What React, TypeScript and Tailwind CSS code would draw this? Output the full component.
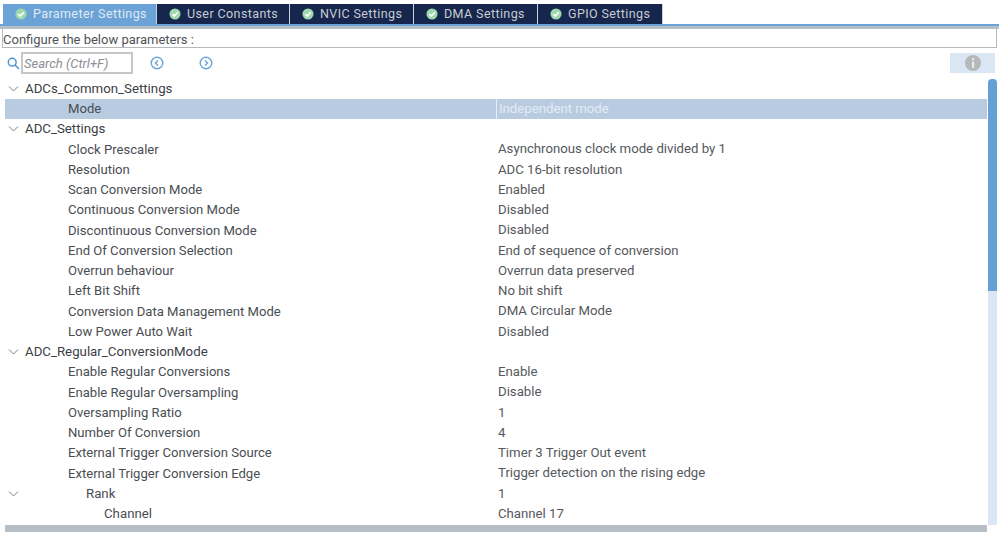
import React from "react";

const tabs = [
  { label: "Parameter Settings", w: "w-[154px]", active: true },
  { label: "User Constants", w: "w-[133px]" },
  { label: "NVIC Settings", w: "w-[124px]" },
  { label: "DMA Settings", w: "w-[124px]" },
  { label: "GPIO Settings", w: "w-[125px]" },
];

type Row = { name: string; value?: string; level: 0 | 1 | 2 | 3; caret?: boolean; selected?: boolean };

const rows: Row[] = [
  { name: "ADCs_Common_Settings", level: 0, caret: true },
  { name: "Mode", value: "Independent mode", level: 1, selected: true },
  { name: "ADC_Settings", level: 0, caret: true },
  { name: "Clock Prescaler", value: "Asynchronous clock mode divided by 1", level: 1 },
  { name: "Resolution", value: "ADC 16-bit resolution", level: 1 },
  { name: "Scan Conversion Mode", value: "Enabled", level: 1 },
  { name: "Continuous Conversion Mode", value: "Disabled", level: 1 },
  { name: "Discontinuous Conversion Mode", value: "Disabled", level: 1 },
  { name: "End Of Conversion Selection", value: "End of sequence of conversion", level: 1 },
  { name: "Overrun behaviour", value: "Overrun data preserved", level: 1 },
  { name: "Left Bit Shift", value: "No bit shift", level: 1 },
  { name: "Conversion Data Management Mode", value: "DMA Circular Mode", level: 1 },
  { name: "Low Power Auto Wait", value: "Disabled", level: 1 },
  { name: "ADC_Regular_ConversionMode", level: 0, caret: true },
  { name: "Enable Regular Conversions", value: "Enable", level: 1 },
  { name: "Enable Regular Oversampling", value: "Disable", level: 1 },
  { name: "Oversampling Ratio", value: "1", level: 1 },
  { name: "Number Of Conversion", value: "4", level: 1 },
  { name: "External Trigger Conversion Source", value: "Timer 3 Trigger Out event", level: 1 },
  { name: "External Trigger Conversion Edge", value: "Trigger detection on the rising edge", level: 1 },
  { name: "Rank", value: "1", level: 2, caret: true },
  { name: "Channel", value: "Channel 17", level: 3 },
];

function Check() {
  return (
    <svg width="12" height="12" viewBox="0 0 13 13" className="shrink-0">
      <circle cx="6.5" cy="6.5" r="6" fill="#9ed8ae" />
      <path d="M3.6 6.7 L5.7 8.7 L9.4 4.8" fill="none" stroke="#ffffff" strokeWidth="1.8" />
    </svg>
  );
}

function Caret() {
  return (
    <svg width="11" height="7" viewBox="0 0 11 7" className="block">
      <path d="M1 1 L5.5 5.5 L10 1" fill="none" stroke="#7b7f86" strokeWidth="1" />
    </svg>
  );
}

function NavCircle({ dir }: { dir: "l" | "r" }) {
  return (
    <svg width="14" height="14" viewBox="0 0 14 14">
      <circle cx="7" cy="7" r="5.8" fill="none" stroke="#6ba6da" strokeWidth="1.4" />
      <path d={dir === "l" ? "M8 4.4 L5.4 7 L8 9.6" : "M6 4.4 L8.6 7 L6 9.6"} fill="none" stroke="#6ba6da" strokeWidth="1.4" />
    </svg>
  );
}

export default function App() {
  return (
    <div className="w-[999px] h-[536px] overflow-hidden bg-white flex flex-col font-['Roboto','Liberation_Sans',sans-serif] text-[13.25px] text-[#4a4d52]">
      <div className="flex h-[24px] pt-[4px] pl-[3px]">
        {tabs.map((t) => (
          <div
            key={t.label}
            className={`${t.w} flex items-center gap-[6px] pl-[12px] tracking-[0.4px] text-[12.5px] border-r border-[#c9d3e0] ${
              t.active ? "bg-[#6ba3d6] text-[#dfeaf5]" : "bg-[#16264c] text-[#c8ccd4]"
            }`}
          >
            <Check />
            <span className="whitespace-nowrap">{t.label}</span>
          </div>
        ))}
      </div>
      <div className="h-[2px] bg-[#6ba3d6]" />
      <div className="h-[3px] bg-[#b7bfc6]" />
      <div className="h-[19px] mx-[2px] border border-t-0 border-[#b5b9bd] flex items-center pt-[4px] text-[#4f5256] whitespace-nowrap text-[13px]">
        Configure the below parameters :
      </div>
      <div className="flex items-center h-[30.5px] pl-[7px] pr-[4px]">
        <svg width="13" height="13" viewBox="0 0 13 13" className="mr-[1px]">
          <circle cx="5.2" cy="5.2" r="3.9" fill="none" stroke="#4d97d6" strokeWidth="1.5" />
          <path d="M8 8 L12 12" stroke="#4d97d6" strokeWidth="1.6" />
        </svg>
        <div className="w-[112px] h-[22px] border-2 border-[#c4c6c8] flex items-center pl-[1px] italic text-[#8b8e92] text-[13px] whitespace-nowrap">
          Search (Ctrl+F)
        </div>
        <div className="ml-[17px] flex gap-[35px]">
          <NavCircle dir="l" />
          <NavCircle dir="r" />
        </div>
        <div className="ml-auto w-[45px] h-[20px] bg-[#dbe6f4] flex items-center justify-center">
          <svg width="16" height="16" viewBox="0 0 16 16">
            <circle cx="8" cy="8" r="8" fill="#b5b7b9" />
            <rect x="7" y="6.5" width="2.2" height="6.5" fill="#e6e8ea" />
            <rect x="7" y="3" width="2.2" height="2.2" fill="#e6e8ea" />
          </svg>
        </div>
      </div>
      <div className="flex flex-1 min-h-0 pl-[5px] pr-[2px]">
        <div className="flex-1 min-w-0 flex flex-col overflow-hidden">
          {rows.map((r) => (
            <div
              key={r.name}
              className={`h-[20.25px] shrink-0 flex items-center whitespace-nowrap ${r.selected ? "bg-[#b9cbe1]" : ""}`}
            >
              <div className="w-[491px] shrink-0 flex items-center relative">
                {r.caret && (
                  <span className="absolute left-[3px] top-1/2 -translate-y-1/2">
                    <Caret />
                  </span>
                )}
                <span
                  className={
                    r.level === 0
                      ? "pl-[20px] text-[#3d4045]"
                      : r.level === 1
                      ? "pl-[63px] text-[13.1px]"
                      : r.level === 2
                      ? "pl-[81px]"
                      : "pl-[99px]"
                  }
                >
                  {r.name}
                </span>
              </div>
              {r.value !== undefined && (
                <div className={`h-full flex items-center pl-[2px] text-[13.2px] ${r.selected ? "border-l border-[#e8eef6] text-[#e4ebf4]" : "text-[#55585c]"}`}>
                  {r.value}
                </div>
              )}
            </div>
          ))}
          <div className="mt-auto mb-[4px] h-[7px] bg-[#b7bfc6] shrink-0" />
        </div>
        <div className="w-[9px] ml-[1px] mb-[11px] rounded-t-[4px] bg-[#dbe6f4] flex flex-col">
          <div className="h-[212px] bg-[#649fd6] rounded-t-[4px]" />
        </div>
      </div>
    </div>
  );
}
